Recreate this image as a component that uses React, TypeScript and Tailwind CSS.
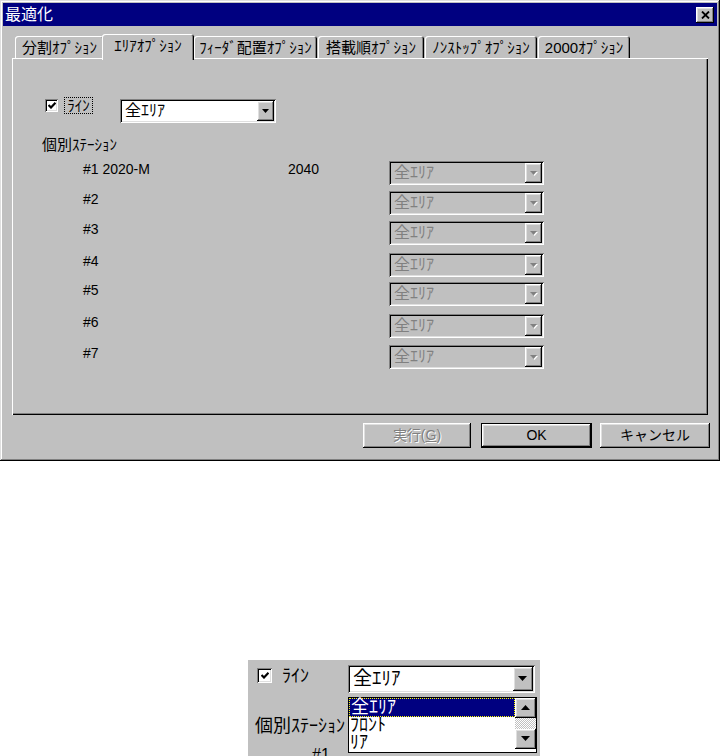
import React from 'react'

const raised = 'shadow-[inset_-1px_-1px_#000,inset_1px_1px_#fff,inset_-2px_-2px_#808080,inset_2px_2px_#dfdfdf]'
const sunken = 'shadow-[inset_1px_1px_#808080,inset_-1px_-1px_#fff,inset_2px_2px_#000,inset_-2px_-2px_#dfdfdf]'
const windowBevel = 'shadow-[inset_-1px_-1px_#000,inset_1px_1px_#dfdfdf,inset_-2px_-2px_#808080,inset_2px_2px_#fff]'
const tabBevel = 'shadow-[inset_1px_1px_#fff,inset_-1px_0_#000,inset_-2px_0_#808080]'
const panelBevel = 'shadow-[inset_1px_1px_#fff,inset_-1px_-1px_#000,inset_-2px_-2px_#808080]'

function Arrow({ disabled, up, big }: { disabled?: boolean; up?: boolean; big?: boolean }) {
  const w = big ? 9 : 7
  const h = big ? 5 : 4
  const pts = up ? `${w / 2},0 ${w},${h} 0,${h}` : `0,0 ${w},0 ${w / 2},${h}`
  return (
    <svg width={w + 1} height={h + 1} viewBox={`0 0 ${w + 1} ${h + 1}`}>
      {disabled && <polygon points={pts} fill="#fff" transform="translate(1 1)" />}
      <polygon points={pts} fill={disabled ? '#808080' : '#000'} />
    </svg>
  )
}

function Combo({
  text,
  disabled,
  className,
  big,
}: {
  text: string
  disabled?: boolean
  className: string
  big?: boolean
}) {
  return (
    <div className={`flex p-[2px] ${sunken} ${disabled ? 'bg-[#c0c0c0]' : 'bg-white'} ${className}`}>
      <div
        className={`flex-1 flex items-center pl-[3px] ${big ? 'text-[19px]' : 'text-[16px]'} ${
          disabled ? 'text-[#808080]' : 'text-black'
        }`}
      >
        {text}
      </div>
      <div className={`${big ? 'w-[20px]' : 'w-[17px]'} flex items-center justify-center bg-[#c0c0c0] ${raised}`}>
        <Arrow disabled={disabled} big={big} />
      </div>
    </div>
  )
}

function Checkbox({ size }: { size: 'sm' | 'lg' }) {
  return (
    <div
      className={`${size === 'sm' ? 'w-[13px] h-[13px]' : 'w-[15px] h-[15px]'} bg-white ${sunken} flex items-center justify-center`}
    >
      <svg width="8" height="7" viewBox="0 0 8 7">
        <polyline points="0.5,3 3,5.5 7.5,0.8" fill="none" stroke="#000" strokeWidth="2.2" />
      </svg>
    </div>
  )
}

const tabs = [
  { label: '分割ｵﾌﾟｼｮﾝ', w: 'w-[89px]' },
  { label: 'ｴﾘｱｵﾌﾟｼｮﾝ', w: 'w-[92px]', active: true },
  { label: 'ﾌｨｰﾀﾞ配置ｵﾌﾟｼｮﾝ', w: 'w-[123px]' },
  { label: '搭載順ｵﾌﾟｼｮﾝ', w: 'w-[106px] ml-[1px]' },
  { label: 'ﾉﾝｽﾄｯﾌﾟｵﾌﾟｼｮﾝ', w: 'w-[112px] ml-[1px]' },
  { label: '2000ｵﾌﾟｼｮﾝ', w: 'w-[92px] ml-[1px]' },
]

const stations = [
  { no: '#1', name: '2020-M', code: '2040', mt: 'mt-[8px]' },
  { no: '#2', name: '', code: '', mt: 'mt-[6px]' },
  { no: '#3', name: '', code: '', mt: 'mt-[6px]' },
  { no: '#4', name: '', code: '', mt: 'mt-[8px]' },
  { no: '#5', name: '', code: '', mt: 'mt-[5px]' },
  { no: '#6', name: '', code: '', mt: 'mt-[8px]' },
  { no: '#7', name: '', code: '', mt: 'mt-[7px]' },
]

function OptimizeDialog() {
  return (
    <div className={`w-[720px] h-[461px] bg-[#c0c0c0] p-[3px] flex flex-col ${windowBevel}`}>
      <div className="h-[23px] bg-[#000080] flex items-center justify-between pl-[2px] pr-[3px]">
        <span className="text-white text-[16px] leading-none">最適化</span>
        <div className={`w-[18px] h-[16px] bg-[#c0c0c0] flex items-center justify-center ${raised}`}>
          <svg width="9" height="8" viewBox="0 0 9 8">
            <path d="M1 0.5 L8 7.5 M8 0.5 L1 7.5" stroke="#000" strokeWidth="1.8" />
          </svg>
        </div>
      </div>

      <div className="mt-[8px] ml-[12px] h-[24px] flex items-end relative z-10">
        {tabs.map((t) =>
          t.active ? (
            <div
              key={t.label}
              className={`${t.w} -ml-[2px] h-[26px] -mb-[2px] bg-[#c0c0c0] rounded-t-[3px] ${tabBevel} flex justify-center pt-[3px] text-[15px] leading-[18px]`}
            >
              {t.label}
            </div>
          ) : (
            <div
              key={t.label}
              className={`${t.w} h-[22px] rounded-t-[3px] ${tabBevel} flex justify-center pt-[3px] text-[15px] leading-[18px]`}
            >
              {t.label}
            </div>
          )
        )}
      </div>

      <div className={`ml-[9px] w-[696px] h-[357px] ${panelBevel} pt-[39px]`}>
        <div className="flex items-start h-[26px]">
          <div className="ml-[33px] mt-[2px]">
            <Checkbox size="sm" />
          </div>
          <div className="ml-[6px] w-[29px] h-[17px] border border-dotted border-black flex items-center justify-center text-[15px] leading-none">
            ﾗｲﾝ
          </div>
          <Combo text="全ｴﾘｱ" className="ml-[27px] mt-[2px] w-[156px] h-[24px]" />
        </div>

        <div className="ml-[30px] mt-[13px] h-[17px] text-[15px] leading-[17px]">個別ｽﾃｰｼｮﾝ</div>

        <div className="flex flex-col">
          {stations.map((s) => (
            <div key={s.no} className={`flex items-start h-[24px] pl-[71px] ${s.mt}`}>
              <div className="w-[205px] text-[14px] leading-[14px] pt-[1px]">
                {s.no} {s.name}
              </div>
              <div className="w-[101px] text-[14px] leading-[14px] pt-[1px]">{s.code}</div>
              <Combo text="全ｴﾘｱ" disabled className="w-[155px] h-[24px]" />
            </div>
          ))}
        </div>
      </div>

      <div className="mt-[8px] flex justify-end pr-[7px] h-[25px]">
        <div className={`w-[108px] h-[25px] flex items-center justify-center text-[14px] text-[#808080] [text-shadow:1px_1px_0_#fff] ${raised}`}>
          実行(<span className="underline">G</span>)
        </div>
        <div className="ml-[10px] w-[111px] h-[25px] border border-black">
          <div className={`w-full h-full flex items-center justify-center text-[14px] ${raised}`}>OK</div>
        </div>
        <div className={`ml-[8px] w-[110px] h-[25px] flex items-center justify-center text-[14px] ${raised}`}>
          キャンセル
        </div>
      </div>
    </div>
  )
}

function ComboSnippet() {
  return (
    <div className="ml-[248px] mt-[199px] w-[292px] h-[96px] bg-[#c0c0c0] relative overflow-hidden">
      <div className="flex items-start pt-[5px]">
        <div className="ml-[9px] mt-[3px]">
          <Checkbox size="lg" />
        </div>
        <div className="ml-[10px] w-[66px] text-[18px] leading-[22px]">ﾗｲﾝ</div>
        <Combo text="全ｴﾘｱ" big className="w-[187px] h-[28px]" />
      </div>
      <div className="ml-[7px] mt-[24px] text-[18px] leading-[18px]">個別ｽﾃｰｼｮﾝ</div>
      <div className="ml-[64px] mt-[12px] text-[16px] leading-[16px]">#1</div>

      <div className="absolute left-[100px] top-[37px] w-[189px] h-[56px] bg-white border border-black flex">
        <div className="flex-1 flex flex-col text-[18px] leading-[17px]">
          <div className="h-[19px] bg-[#000080] text-white border border-dotted border-[#ffff00] pl-[1px]">全ｴﾘｱ</div>
          <div className="h-[17px] pl-[1px]">ﾌﾛﾝﾄ</div>
          <div className="h-[17px] pl-[1px]">ﾘｱ</div>
        </div>
        <div className="w-[21px] flex flex-col">
          <div className={`h-[20px] bg-[#c0c0c0] flex items-center justify-center ${raised}`}>
            <Arrow up big />
          </div>
          <div className="h-[11px] bg-[repeating-conic-gradient(#fff_0_25%,#c0c0c0_0_50%)] bg-[length:2px_2px]" />
          <div className={`h-[20px] bg-[#c0c0c0] flex items-center justify-center ${raised}`}>
            <Arrow big />
          </div>
        </div>
      </div>
    </div>
  )
}

export default function App() {
  return (
    <div className="w-[721px] h-[756px] bg-white overflow-hidden text-black font-['Liberation_Sans','Noto_Sans_CJK_JP',sans-serif]">
      <OptimizeDialog />
      <ComboSnippet />
    </div>
  )
}
